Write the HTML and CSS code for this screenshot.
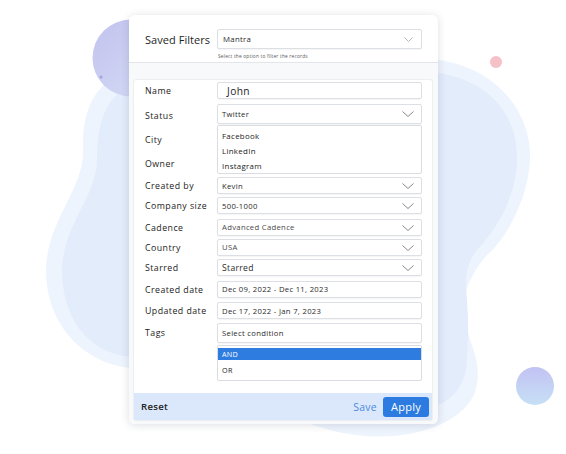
FILE: index.html
```html
<!DOCTYPE html>
<html>
<head>
<meta charset="utf-8">
<link rel="stylesheet" href="styles.css">
</head>
<body>
<div class="stage">
  <svg class="backdrop" width="566" height="454" viewBox="0 0 566 454">
    <defs>
      <linearGradient id="g1" x1="0" y1="0" x2="1" y2="1">
        <stop offset="0" stop-color="#c2c2ee"/>
        <stop offset="1" stop-color="#d6def6"/>
      </linearGradient>
      <linearGradient id="g2" x1="0" y1="0" x2="0" y2="1">
        <stop offset="0" stop-color="#c2c2f3"/>
        <stop offset="1" stop-color="#c6e0f5"/>
      </linearGradient>
    </defs>
    <path fill="#eef4fd" d="M125 74 C220 55 380 48 440 60 C500 70 532 115 530 160 C528 200 505 240 487 255 C470 275 460 295 466 325 C472 350 483 365 475 392 C465 420 420 440 365 436 C340 434 320 428 300 420 L200 400 L130 368 C80 362 46 322 46 270 C47 220 84 190 83 150 C82 110 95 82 125 74 Z"/>
    <path fill="#e2ecfb" d="M130 88 C250 70 380 65 440 73 C490 82 518 115 517 160 C516 195 500 225 477 250 C465 265 465 280 467 300 C469 330 468 345 466 370 C462 390 450 400 438 405 L200 380 L130 357 C85 352 62 315 62 270 C63 225 97 195 97 160 C97 125 105 95 130 88 Z"/>
    <circle cx="131" cy="58" r="38.5" fill="url(#g1)"/>
    <circle cx="101" cy="77" r="1.6" fill="#a3a3e4"/>
    <circle cx="496" cy="62" r="6" fill="#f5c1c7"/>
    <circle cx="535" cy="386" r="19" fill="url(#g2)"/>
  </svg>

  <div class="card">
    <div class="head">
      <div class="head-title">Saved Filters</div>
      <div class="head-field">
        <div class="select select-head">
          <span>Mantra</span>
          <svg class="chev chev-light" width="9" height="5" viewBox="0 0 9 5"><polyline points="0.5,0.5 4.5,4.5 8.5,0.5"/></svg>
        </div>
        <div class="helper">Select the option to filter the records</div>
      </div>
    </div>

    <div class="body">
      <div class="panel">
        <div class="grid">
          <div class="label">Name</div>
          <div class="input input-big">John</div>

          <div class="label mt2 low">Status</div>
          <div class="select tall mt2">
            <span>Twitter</span>
            <svg class="chev" width="12" height="6" viewBox="0 0 12 6"><polyline points="0.5,0.5 6,5.5 11.5,0.5"/></svg>
          </div>

          <div class="label-stack">
            <div class="label">City</div>
            <div class="label">Owner</div>
          </div>
          <div class="list list-status">
            <div class="opt">Facebook</div>
            <div class="opt">LinkedIn</div>
            <div class="opt">Instagram</div>
          </div>

          <div class="label">Created by</div>
          <div class="select">
            <span>Kevin</span>
            <svg class="chev" width="12" height="6" viewBox="0 0 12 6"><polyline points="0.5,0.5 6,5.5 11.5,0.5"/></svg>
          </div>

          <div class="label">Company size</div>
          <div class="select">
            <span>500-1000</span>
            <svg class="chev" width="12" height="6" viewBox="0 0 12 6"><polyline points="0.5,0.5 6,5.5 11.5,0.5"/></svg>
          </div>

          <div class="label mt2">Cadence</div>
          <div class="select mt2 raised">
            <span class="muted">Advanced Cadence</span>
            <svg class="chev" width="12" height="6" viewBox="0 0 12 6"><polyline points="0.5,0.5 6,5.5 11.5,0.5"/></svg>
          </div>

          <div class="label">Country</div>
          <div class="select raised">
            <span class="muted">USA</span>
            <svg class="chev" width="12" height="6" viewBox="0 0 12 6"><polyline points="0.5,0.5 6,5.5 11.5,0.5"/></svg>
          </div>

          <div class="label">Starred</div>
          <div class="select">
            <span class="larger">Starred</span>
            <svg class="chev" width="12" height="6" viewBox="0 0 12 6"><polyline points="0.5,0.5 6,5.5 11.5,0.5"/></svg>
          </div>

          <div class="label mt2">Created date</div>
          <div class="input mt2 raised">Dec 09, 2022 - Dec 11, 2023</div>

          <div class="label mt1">Updated date</div>
          <div class="input mt1">Dec 17, 2022 - Jan 7, 2023</div>

          <div class="label mt1">Tags</div>
          <div class="select tall mt1">
            <span>Select condition</span>
          </div>

          <div></div>
          <div class="list list-tags">
            <div class="opt opt-active">AND</div>
            <div class="opt">OR</div>
          </div>
        </div>

        <div class="footer">
          <span class="reset">Reset</span>
          <div class="actions">
            <span class="save">Save</span>
            <span class="apply">Apply</span>
          </div>
        </div>
      </div>
    </div>
  </div>
</div>
</body>
</html>
```

FILE: styles.css
```css
* { box-sizing: border-box; }

html, body {
  margin: 0;
  padding: 0;
  background: #ffffff;
}

body {
  width: 566px;
  height: 454px;
  overflow: hidden;
  font-family: "Open Sans", "Noto Sans", sans-serif;
  color: #222;
}

.stage {
  position: relative;
  width: 566px;
  height: 454px;
  padding-top: 15px;
  padding-left: 129px;
}

.backdrop {
  position: absolute;
  left: 0;
  top: 0;
}

.card {
  position: relative;
  width: 309px;
  background: #ffffff;
  border-radius: 6px;
  box-shadow: 0 1px 8px rgba(40, 50, 80, 0.16);
}

.head {
  display: flex;
  padding: 14px 16px 0 16px;
  height: 48px;
  border-bottom: 1px solid #e3e5ea;
}

.head-title {
  width: 72px;
  height: 20px;
  display: flex;
  align-items: center;
  font-size: 11px;
  font-weight: 500;
  color: #1f1f1f;
  letter-spacing: 0.05px;
}

.head-field {
  width: 205px;
}

.helper {
  font-size: 4.8px;
  letter-spacing: 0.2px;
  color: #555;
  margin-top: 4px;
  padding-left: 1px;
}

.body {
  background: #f8f9fb;
  padding: 16px 5px 3px 4px;
  border-radius: 0 0 6px 6px;
}

.panel {
  background: #ffffff;
  border: 1px solid #eceef2;
  border-radius: 3px;
}

.grid {
  display: grid;
  grid-template-columns: 72px 205px;
  row-gap: 3px;
  padding: 2px 9px 12px 11px;
}

.label {
  display: flex;
  align-items: center;
  font-size: 8.8px;
  letter-spacing: 0.45px;
  color: #222;
}

.label.low {
  padding-top: 3px;
}

.label-stack {
  display: flex;
  flex-direction: column;
  padding-top: 7px;
  gap: 12px;
}

.mt1 { margin-top: 1px; }
.mt2 { margin-top: 2px; }

.input,
.select {
  height: 17px;
  border: 1px solid #dcdfe4;
  border-radius: 2px;
  background: #fff;
  display: flex;
  align-items: center;
  padding: 0 7px 0 4px;
  font-size: 7.7px;
  letter-spacing: 0.3px;
  color: #2a2a2a;
  box-shadow: 0 1px 1px rgba(0, 0, 0, 0.04);
}

.select {
  justify-content: space-between;
}

.tall { height: 20px; }

.raised span,
.input.raised {
  padding-bottom: 2px;
}

.input-big {
  font-size: 10.2px;
  padding-left: 9px;
  letter-spacing: 0.4px;
  color: #1d1d1d;
}

.select-head {
  height: 20px;
  font-size: 7.8px;
  padding-left: 5px;
  padding-right: 8px;
}

.muted { color: #4a4a4a; }
.larger { font-size: 8.6px; }

.chev {
  fill: none;
  stroke: #7c7c7c;
  stroke-width: 0.9;
}

.chev-light {
  stroke: #b0b0b0;
}

.list {
  border: 1px solid #d9dce1;
  border-radius: 2px;
  background: #fff;
  margin-top: -2px;
  font-size: 7.9px;
  letter-spacing: 0.3px;
  color: #222;
}

.list-status {
  height: 49px;
  padding-top: 2px;
}

.list-status .opt {
  height: 15px;
  display: flex;
  align-items: center;
  padding-left: 4px;
}

.list-tags {
  height: 36px;
  padding: 2px 0 0 0;
  margin-top: -1px;
}

.list-tags .opt {
  height: 12px;
  display: flex;
  align-items: center;
  padding-left: 4px;
  font-size: 7.2px;
}

.list-tags .opt + .opt {
  margin-top: 4px;
}

.opt-active {
  background: #2f7ce0;
  color: #ffffff;
}

.footer {
  height: 27px;
  background: #dbe8fb;
  display: flex;
  align-items: center;
  justify-content: space-between;
  padding: 0 3px 0 7px;
}

.reset {
  font-size: 9.6px;
  font-weight: 600;
  letter-spacing: 0.3px;
  color: #222;
}

.actions {
  display: flex;
  align-items: center;
  gap: 6px;
}

.save {
  font-size: 10.4px;
  letter-spacing: 0.3px;
  color: #4a8ae0;
}

.apply {
  width: 46px;
  height: 20px;
  background: #2c7be0;
  border-radius: 3px;
  color: #ffffff;
  font-size: 11px;
  letter-spacing: 0.3px;
  display: flex;
  align-items: center;
  justify-content: center;
}
```
